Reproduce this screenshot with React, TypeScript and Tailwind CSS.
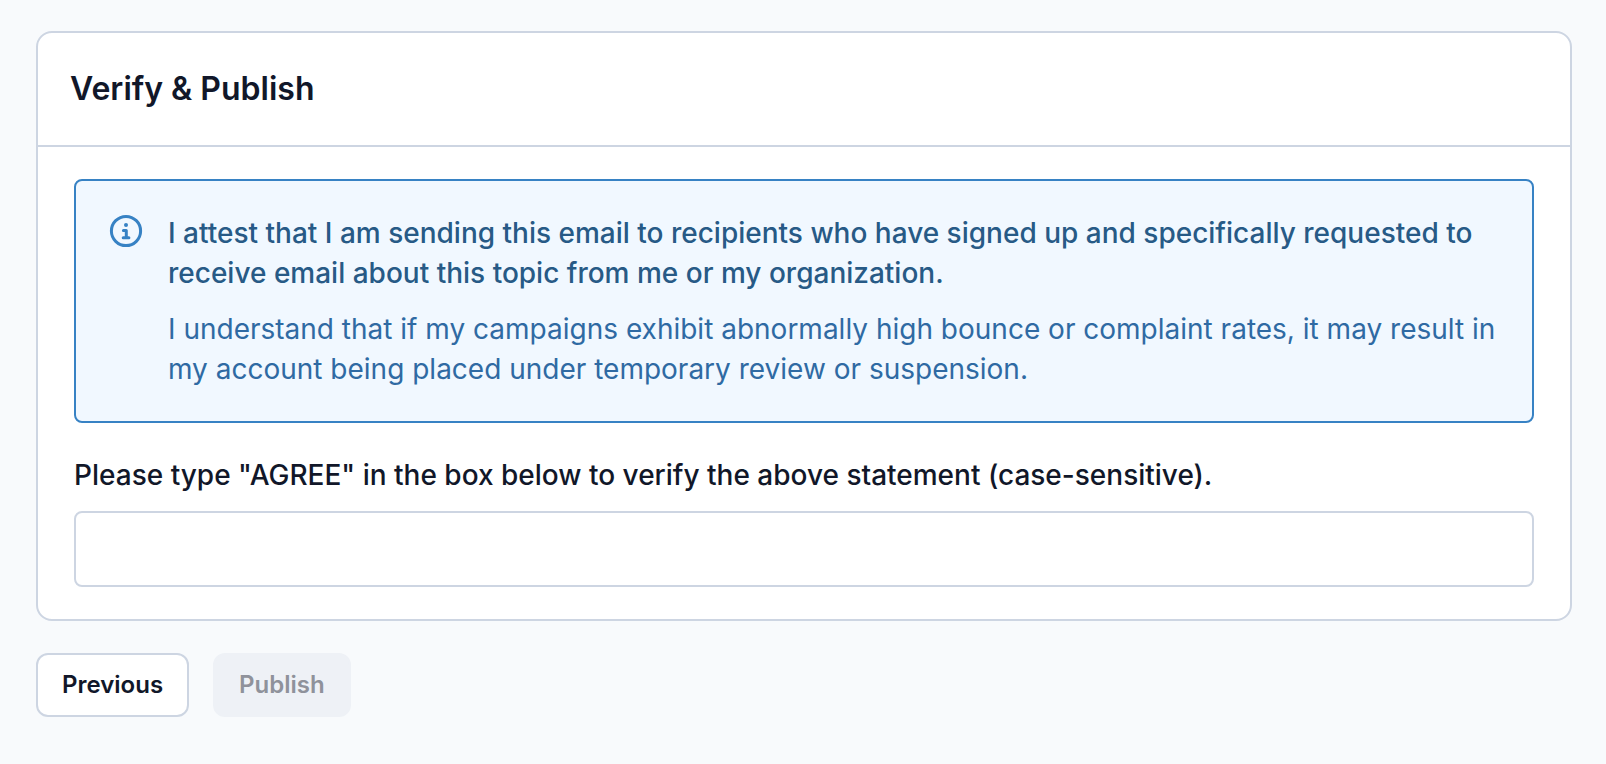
import { useState } from 'react';

function InfoIcon() {
  return (
    <svg
      className="size-9 shrink-0 text-[#3782c4]"
      viewBox="0 0 36 36"
      fill="none"
      stroke="currentColor"
      strokeWidth="3"
      strokeLinecap="round"
      strokeLinejoin="round"
      aria-hidden="true"
    >
      <circle cx="18" cy="18" r="14.6" />
      <circle cx="18" cy="12.1" r="2" fill="currentColor" stroke="none" />
      <path d="M15.4 17.6H18.3V24.7M15.2 24.7H20.9" />
    </svg>
  );
}

export default function App() {
  const [statement, setStatement] = useState('');
  const canPublish = statement === 'AGREE';

  return (
    <main className="min-h-screen bg-[#f8fafc] py-[31px] pr-[34px] pl-9 font-['Inter',sans-serif] text-[#111729]">
      <section className="rounded-2xl border-2 border-[#cdd5e2] bg-white">
        <header className="border-b-2 border-[#cdd5e2] px-8 py-9">
          <h1 className="text-[32px] leading-10 font-semibold">Verify &amp; Publish</h1>
        </header>
        <div className="px-9 py-8">
          <div className="flex gap-6 rounded-lg border-2 border-[#3782c4] bg-[#f1f8ff] p-8 text-[28px] leading-10">
            <InfoIcon />
            <div className="flex flex-col gap-4">
              <p className="font-medium text-[#275a86]">
                I attest that I am sending this email to recipients who have signed up and specifically requested to
                receive email about this topic from me or my organization.
              </p>
              <p className="text-[#2f6aa3]">
                I understand that if my campaigns exhibit abnormally high bounce or complaint rates, it may result in my
                account being placed under temporary review or suspension.
              </p>
            </div>
          </div>
          <label htmlFor="agree" className="mt-8 block text-[28px] leading-10 font-medium">
            Please type "AGREE" in the box below to verify the above statement (case-sensitive).
          </label>
          <input
            id="agree"
            type="text"
            value={statement}
            onChange={(event) => setStatement(event.target.value)}
            className="mt-4 block h-[76px] w-full rounded-lg border-2 border-[#cdd5e2] bg-white px-6 text-[28px] outline-none"
          />
        </div>
      </section>
      <div className="mt-8 flex gap-6 text-2xl font-semibold">
        <button type="button" className="h-16 rounded-xl border-2 border-[#cdd5e2] bg-white px-6">
          Previous
        </button>
        <button
          type="button"
          disabled={!canPublish}
          className="h-16 rounded-xl border-2 border-[#eef1f6] bg-[#eef1f6] px-6 disabled:text-[#8f929b]"
        >
          Publish
        </button>
      </div>
    </main>
  );
}
